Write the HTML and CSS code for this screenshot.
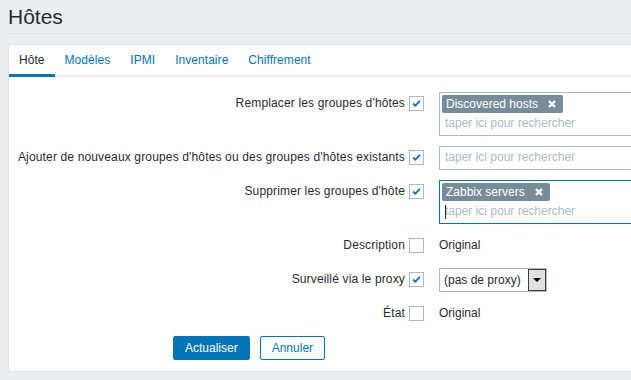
FILE: index.html
```html
<!DOCTYPE html>
<html lang="fr">
<head>
    <meta charset="UTF-8">
    <title>Hôtes</title>
    <link rel="stylesheet" href="styles.css">
</head>
<body>
    <div class="wrapper">
        <div class="header">
            <h1>Hôtes</h1>
        </div>

        <div class="panel">
            <ul class="tabs">
                <li class="active"><a href="#">Hôte</a></li>
                <li><a href="#">Modèles</a></li>
                <li><a href="#">IPMI</a></li>
                <li><a href="#">Inventaire</a></li>
                <li><a href="#">Chiffrement</a></li>
            </ul>

            <div class="formList">
                <div class="label">
                    <span>Remplacer les groupes d'hôtes</span>
                    <span class="check on"><svg viewBox="0 0 15 15"><polyline points="3.5,7.5 6.2,10 11.5,4.5"/></svg></span>
                </div>
                <div class="field">
                    <div class="multiselect tall">
                        <div class="tags">
                            <span class="tag">Discovered hosts <i class="remove"><svg viewBox="0 0 8 8"><path d="M1 1L7 7M7 1L1 7"/></svg></i></span>
                        </div>
                        <div class="search">taper ici pour rechercher</div>
                    </div>
                </div>

                <div class="label">
                    <span>Ajouter de nouveaux groupes d'hôtes ou des groupes d'hôtes existants</span>
                    <span class="check on"><svg viewBox="0 0 15 15"><polyline points="3.5,7.5 6.2,10 11.5,4.5"/></svg></span>
                </div>
                <div class="field">
                    <div class="multiselect">
                        <div class="search">taper ici pour rechercher</div>
                    </div>
                </div>

                <div class="label">
                    <span>Supprimer les groupes d'hôte</span>
                    <span class="check on"><svg viewBox="0 0 15 15"><polyline points="3.5,7.5 6.2,10 11.5,4.5"/></svg></span>
                </div>
                <div class="field">
                    <div class="multiselect tall focused">
                        <div class="tags">
                            <span class="tag">Zabbix servers <i class="remove"><svg viewBox="0 0 8 8"><path d="M1 1L7 7M7 1L1 7"/></svg></i></span>
                        </div>
                        <div class="search"><span class="caret"></span>taper ici pour rechercher</div>
                    </div>
                </div>

                <div class="label">
                    <span>Description</span>
                    <span class="check"></span>
                </div>
                <div class="field text">Original</div>

                <div class="label">
                    <span>Surveillé via le proxy</span>
                    <span class="check on"><svg viewBox="0 0 15 15"><polyline points="3.5,7.5 6.2,10 11.5,4.5"/></svg></span>
                </div>
                <div class="field">
                    <div class="select">
                        <span>(pas de proxy)</span>
                        <span class="arrow"></span>
                    </div>
                </div>

                <div class="label">
                    <span>État</span>
                    <span class="check"></span>
                </div>
                <div class="field text">Original</div>

                <div class="buttons">
                    <button type="button" class="btnMain">Actualiser</button>
                    <button type="button" class="btnAlt">Annuler</button>
                </div>
            </div>
        </div>
    </div>
</body>
</html>
```

FILE: styles.css
```css
*{
    margin: 0;
    padding: 0;
    box-sizing: border-box;
    font-family: "Liberation Sans", Arial, sans-serif;
}
html, body{
    width: 631px;
    height: 380px;
    overflow: hidden;
}
body{
    background-color: #ebeef0;
    color: #1f2c33;
    font-size: 12px;
}
.wrapper{
    padding: 0 0 0 8px;
    width: 1000px;
}
.header{
    padding-top: 4px;
    padding-bottom: 4px;
    border-bottom: 1px solid #dfe4e7;
}
.header h1{
    font-size: 21px;
    font-weight: normal;
    line-height: 25px;
}
.panel{
    margin-top: 10px;
    background-color: #fff;
    border: 1px solid #dfe4e7;
    padding-bottom: 11px;
}
.tabs{
    list-style: none;
    display: flex;
    box-shadow: inset 0 -2px 0 #ebeef0;
}
.tabs a{
    display: block;
    padding: 8px 10px 7px;
    line-height: 14px;
    color: #0275b8;
    text-decoration: none;
    letter-spacing: 0.05px;
    border-bottom: 3px solid transparent;
}
.tabs .active a{
    color: #1f2c33;
    border-bottom-color: #0275b8;
}
.formList{
    display: grid;
    grid-template-columns: 405px 1fr;
    column-gap: 15px;
    row-gap: 10px;
    padding: 15px 0 0 10px;
}
.label{
    height: 22px;
    display: flex;
    align-items: center;
    justify-content: flex-end;
    gap: 4px;
    white-space: nowrap;
    letter-spacing: 0.15px;
}
.check{
    width: 15px;
    height: 15px;
    border: 1px solid #acbbc2;
    background-color: #fff;
    display: flex;
}
.check svg{
    width: 13px;
    height: 13px;
    fill: none;
    stroke: #0275b8;
    stroke-width: 2;
}
.field.text{
    line-height: 22px;
    height: 24px;
}
.multiselect{
    width: 460px;
    height: 24px;
    border: 1px solid #acbbc2;
    padding: 0 2px;
}
.multiselect.tall{
    height: 44px;
    padding-top: 2px;
}
.multiselect.focused{
    border-color: #0275b8;
}
.tags{
    display: flex;
    height: 18px;
}
.tag{
    display: inline-flex;
    align-items: center;
    gap: 10px;
    height: 18px;
    padding: 0 7px 0 4px;
    border-radius: 2px;
    background-color: #768d99;
    color: #fff;
}
.remove{
    display: flex;
}
.remove svg{
    width: 8px;
    height: 8px;
    stroke: #fff;
    stroke-width: 2.4;
}
.search{
    height: 22px;
    line-height: 21px;
    padding-left: 3px;
    color: #acbbc2;
    position: relative;
}
.caret{
    position: absolute;
    left: 3px;
    top: 4px;
    width: 1px;
    height: 14px;
    background-color: #1f2c33;
}
.select{
    width: 108px;
    height: 24px;
    border: 1px solid #acbbc2;
    display: flex;
    align-items: center;
    justify-content: space-between;
    padding-left: 4px;
}
.arrow{
    width: 18px;
    height: 22px;
    border: 1px solid #3c3c3c;
    background-color: #e1e1e1;
    display: flex;
    align-items: center;
    justify-content: center;
}
.arrow::after{
    content: "";
    border-left: 4px solid transparent;
    border-right: 4px solid transparent;
    border-top: 4px solid #000;
}
.buttons{
    grid-column: 1 / -1;
    display: flex;
    gap: 10px;
    padding-left: 154px;
}
.buttons button{
    height: 24px;
    padding: 0 11px;
    font-size: 12px;
    border: 1px solid #0275b8;
    border-radius: 2px;
}
.btnMain{
    background-color: #0275b8;
    color: #fff;
}
.btnAlt{
    background-color: #fff;
    color: #0275b8;
}
```
